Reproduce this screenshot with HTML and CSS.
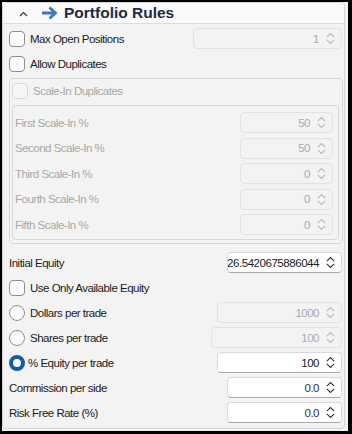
FILE: index.html
```html
<!DOCTYPE html>
<html lang="en">
<head>
    <meta charset="UTF-8">
    <title>Portfolio Rules</title>
    <link rel="stylesheet" href="styles.css">
</head>
<body>
    <div class="window">
        <div class="panel">
            <header class="head">
                <svg class="caret" width="9" height="6" viewBox="0 0 9 6"><path d="M1 5 L4.5 1.5 L8 5" fill="none" stroke="#333" stroke-width="1.1"/></svg>
                <svg class="arrow" width="17" height="14" viewBox="0 0 17 14"><path d="M1 7 H14 M8.5 1.5 L14.5 7 L8.5 12.5" fill="none" stroke="#3a76c4" stroke-width="2.8"/></svg>
                <h1>Portfolio Rules</h1>
            </header>

            <div class="content">
                <div class="row">
                    <span class="box"></span><span class="label">Max Open Positions</span>
                    <div class="spin off w-max">1<svg class="chev" width="9" height="13" viewBox="0 0 9 13"><path d="M0.8 5.2 L4.5 1.5 L8.2 5.2 M0.8 7.8 L4.5 11.5 L8.2 7.8"/></svg></div>
                </div>
                <div class="row">
                    <span class="box"></span><span class="label">Allow Duplicates</span>
                </div>

                <div class="group">
                    <div class="row short off">
                        <span class="box faint"></span><span class="label">Scale-In Duplicates</span>
                    </div>
                    <div class="group inner">
                        <div class="row tall off"><span class="label flush">First Scale-In %</span><div class="spin off w-in">50<svg class="chev" width="9" height="13" viewBox="0 0 9 13"><path d="M0.8 5.2 L4.5 1.5 L8.2 5.2 M0.8 7.8 L4.5 11.5 L8.2 7.8"/></svg></div></div>
                        <div class="row tall off"><span class="label flush">Second Scale-In %</span><div class="spin off w-in">50<svg class="chev" width="9" height="13" viewBox="0 0 9 13"><path d="M0.8 5.2 L4.5 1.5 L8.2 5.2 M0.8 7.8 L4.5 11.5 L8.2 7.8"/></svg></div></div>
                        <div class="row tall off"><span class="label flush">Third Scale-In %</span><div class="spin off w-in">0<svg class="chev" width="9" height="13" viewBox="0 0 9 13"><path d="M0.8 5.2 L4.5 1.5 L8.2 5.2 M0.8 7.8 L4.5 11.5 L8.2 7.8"/></svg></div></div>
                        <div class="row tall off"><span class="label flush">Fourth Scale-In %</span><div class="spin off w-in">0<svg class="chev" width="9" height="13" viewBox="0 0 9 13"><path d="M0.8 5.2 L4.5 1.5 L8.2 5.2 M0.8 7.8 L4.5 11.5 L8.2 7.8"/></svg></div></div>
                        <div class="row tall off"><span class="label flush">Fifth Scale-In %</span><div class="spin off w-in">0<svg class="chev" width="9" height="13" viewBox="0 0 9 13"><path d="M0.8 5.2 L4.5 1.5 L8.2 5.2 M0.8 7.8 L4.5 11.5 L8.2 7.8"/></svg></div></div>
                    </div>
                </div>

                <div class="row gap">
                    <span class="label flush">Initial Equity</span>
                    <div class="spin w-eq"><span class="clip">26.5420675886044</span><svg class="chev" width="9" height="13" viewBox="0 0 9 13"><path d="M0.8 5.2 L4.5 1.5 L8.2 5.2 M0.8 7.8 L4.5 11.5 L8.2 7.8"/></svg></div>
                </div>
                <div class="row">
                    <span class="box"></span><span class="label">Use Only Available Equity</span>
                </div>
                <div class="row">
                    <span class="radio"></span><span class="label">Dollars per trade</span>
                    <div class="spin off w-dol">1000<svg class="chev" width="9" height="13" viewBox="0 0 9 13"><path d="M0.8 5.2 L4.5 1.5 L8.2 5.2 M0.8 7.8 L4.5 11.5 L8.2 7.8"/></svg></div>
                </div>
                <div class="row">
                    <span class="radio"></span><span class="label">Shares per trade</span>
                    <div class="spin off w-sh">100<svg class="chev" width="9" height="13" viewBox="0 0 9 13"><path d="M0.8 5.2 L4.5 1.5 L8.2 5.2 M0.8 7.8 L4.5 11.5 L8.2 7.8"/></svg></div>
                </div>
                <div class="row">
                    <span class="radio on"></span><span class="label tight">% Equity per trade</span>
                    <div class="spin w-dol">100<svg class="chev" width="9" height="13" viewBox="0 0 9 13"><path d="M0.8 5.2 L4.5 1.5 L8.2 5.2 M0.8 7.8 L4.5 11.5 L8.2 7.8"/></svg></div>
                </div>
                <div class="row">
                    <span class="label flush">Commission per side</span>
                    <div class="spin w-eq num">0.0<svg class="chev" width="9" height="13" viewBox="0 0 9 13"><path d="M0.8 5.2 L4.5 1.5 L8.2 5.2 M0.8 7.8 L4.5 11.5 L8.2 7.8"/></svg></div>
                </div>
                <div class="row">
                    <span class="label flush">Risk Free Rate (%)</span>
                    <div class="spin w-eq num">0.0<svg class="chev" width="9" height="13" viewBox="0 0 9 13"><path d="M0.8 5.2 L4.5 1.5 L8.2 5.2 M0.8 7.8 L4.5 11.5 L8.2 7.8"/></svg></div>
                </div>
            </div>
        </div>
    </div>
</body>
</html>
```

FILE: styles.css
```css
body {
    margin: 0;
    background: #000;
    font-family: "Liberation Sans", Arial, sans-serif;
    font-size: 11.5px;
    letter-spacing: -0.5px;
    color: #1b1b1b;
}
.window {
    margin: 2px 4px 3px 2px;
    height: 429px;
    background: #f3f3f3;
}
.panel {
    width: 341px;
    height: 425px;
    border: 1px solid #d5d5d5;
    border-radius: 4px;
    background: #f3f3f3;
    overflow: hidden;
}
.head {
    display: flex;
    align-items: center;
    height: 20px;
    background: #fafafa;
    border-bottom: 1px solid #dcdcdc;
}
.caret {
    margin-left: 16px;
    margin-top: 1px;
}
.arrow {
    margin-left: 13px;
}
.head h1 {
    margin: 0 0 0 6px;
    font-size: 15.5px;
    letter-spacing: 0;
    font-weight: bold;
    color: #1c2a48;
}
.content {
    padding: 2px 2px 0 6px;
}
.row {
    display: flex;
    align-items: center;
    height: 25px;
}
.row.short {
    height: 24px;
}
.row.tall {
    height: 25.5px;
}
.row.gap {
    margin-top: 6px;
}
.label {
    margin-left: 5px;
    white-space: nowrap;
}
.label.flush {
    margin-left: 0;
}
.label.tight {
    margin-left: 3px;
}
.off {
    color: #a8a8a8;
}
.box {
    width: 14px;
    height: 14px;
    border: 1px solid #8f8f8f;
    border-radius: 4px;
    background: #fbfbfb;
    flex: none;
}
.box.faint {
    border-color: #dadada;
    background: #f6f6f6;
}
.radio {
    width: 14px;
    height: 14px;
    border: 1px solid #8f8f8f;
    border-radius: 50%;
    background: #fbfbfb;
    flex: none;
}
.radio.on {
    width: 8px;
    height: 8px;
    border: 4px solid #0f5fa8;
    background: #fff;
}
.group {
    border: 1px solid #d8d8d8;
    border-radius: 4px;
    margin: 2px 0 0 0;
    padding: 0 0 0 2px;
    width: 330px;
}
.group.inner {
    margin: 2px 0 3px 0;
    padding: 4px 5px 0 2px;
    width: 318px;
    height: 129px;
}
.spin {
    margin-left: auto;
    display: flex;
    align-items: center;
    justify-content: flex-end;
    box-sizing: border-box;
    height: 21px;
    padding-right: 6px;
    border: 1px solid #d9d9d9;
    border-bottom-color: #a9a9a9;
    border-radius: 4px;
    background: #fff;
    color: #1b1b1b;
    overflow: hidden;
    white-space: nowrap;
}
.spin.off {
    background: #f3f3f3;
    border-color: #e2e2e2;
    color: #aaa;
}
.spin.num {
    color: #22305a;
}
.clip {
    flex: none;
    letter-spacing: -0.45px;
}
.chev {
    flex: none;
    margin-left: 7px;
    fill: none;
    stroke: #333;
    stroke-width: 1.1;
}
.spin.off .chev {
    stroke: #b8b8b8;
}
.w-max { width: 149px; }
.w-in { width: 93px; }
.w-eq { width: 115px; }
.w-dol { width: 125px; }
.w-sh { width: 131px; }
```
